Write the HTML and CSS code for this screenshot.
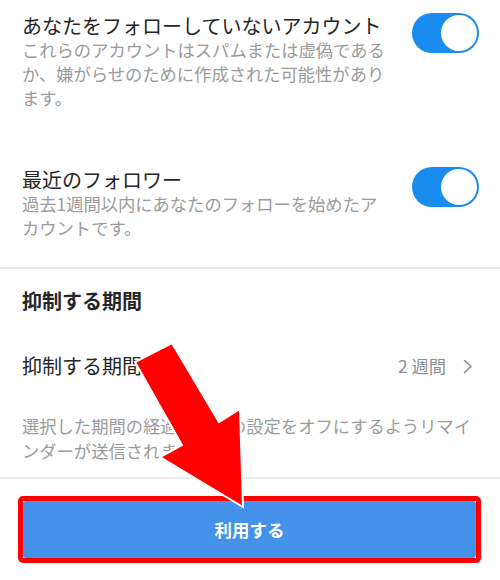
FILE: index.html
```html
<!DOCTYPE html>
<html lang="ja">
<head>
  <meta charset="UTF-8">
  <meta name="viewport" content="width=device-width, initial-scale=1.0">
  <title>制限するアカウント</title>
  <link rel="stylesheet" href="styles.css">
</head>
<body>
  <div class="screen">
    <section class="group">
      <div class="setting">
        <div class="setting-text">
          <div class="setting-title">あなたをフォローしていないアカウント</div>
          <div class="setting-desc">これらのアカウントはスパムまたは虚偽であるか、嫌がらせのために作成された可能性があります。</div>
        </div>
        <div class="toggle on"><span class="knob"></span></div>
      </div>

      <div class="setting second">
        <div class="setting-text">
          <div class="setting-title">最近のフォロワー</div>
          <div class="setting-desc">過去1週間以内にあなたのフォローを始めたアカウントです。</div>
        </div>
        <div class="toggle on"><span class="knob"></span></div>
      </div>
    </section>

    <hr class="divider">

    <section class="period">
      <h2 class="period-heading">抑制する期間</h2>
      <div class="period-row">
        <span class="period-label">抑制する期間</span>
        <span class="period-value">2 週間
          <svg class="chevron" width="10" height="15" viewBox="0 0 10 15">
            <path d="M1.5 1.5 L8 7.5 L1.5 13.5" fill="none" stroke="#8e8e8e" stroke-width="1.6" stroke-linecap="round" stroke-linejoin="round"/>
          </svg>
        </span>
      </div>
      <p class="period-note">選択した期間の経過後にこの設定をオフにするようリマインダーが送信されます。</p>
    </section>

    <hr class="divider">

    <div class="footer">
      <div class="highlight">
        <button class="primary-btn">利用する</button>
      </div>
    </div>

    <!-- pointer arrow drawn on top of the page -->
    <svg class="pointer" width="500" height="580" viewBox="0 0 500 580">
      <polygon points="135,362 172,343 219,422 240,409 243,507 160,457 182,445" fill="#ff0000" stroke="#ffffff" stroke-width="2" stroke-linejoin="miter"/>
    </svg>
  </div>
</body>
</html>
```

FILE: styles.css
```css
body {
  margin: 0;
  background: #fff;
  font-family: "Noto Sans CJK JP", "Noto Sans", sans-serif;
  color: #262626;
}

.screen {
  position: relative;
  width: 500px;
  height: 580px;
  overflow: hidden;
}

/* Toggle rows */
.setting {
  display: flex;
  align-items: flex-start;
  gap: 20px;
  padding: 14px 21px 0 22px;
}

.setting.second {
  padding-top: 58px;
}

.setting-text {
  width: 370px;
}

.setting-title {
  font-size: 20px;
  line-height: 24px;
}

.setting-desc {
  font-size: 17.3px;
  line-height: 24px;
  color: #9b9b9b;
}

.toggle {
  width: 67px;
  height: 40px;
  margin-top: -1px;
  border-radius: 20px;
  background: #c7c7c7;
  position: relative;
  flex-shrink: 0;
}

.toggle.on {
  background: #1a8cf0;
}

.toggle .knob {
  position: absolute;
  top: 2px;
  left: 2px;
  width: 36px;
  height: 36px;
  border-radius: 50%;
  background: #fff;
}

.toggle.on .knob {
  left: auto;
  right: 2px;
}

.divider {
  margin: 0;
  border: 0;
  height: 2px;
  background: #ececec;
}

.group + .divider {
  margin-top: 27px;
}

/* Period section */
.period {
  padding: 20px 22px 0;
}

.period-heading {
  margin: 0;
  font-size: 20px;
  line-height: 24px;
  font-weight: 700;
}

.period-row {
  display: flex;
  justify-content: space-between;
  align-items: center;
  margin-top: 41px;
  font-size: 20px;
  line-height: 24px;
}

.period-value {
  display: flex;
  align-items: center;
  gap: 17px;
  font-size: 17.3px;
  color: #8e8e8e;
  padding-right: 5px;
}

.chevron {
  display: block;
}

.period-note {
  margin: 35px 0 14px;
  font-size: 17.3px;
  line-height: 25px;
  color: #9b9b9b;
}

/* Bottom button */
.footer {
  padding: 17px 19px 0 18px;
}

.highlight {
  border: 5px solid #ff0000;
  border-radius: 5px;
}

.primary-btn {
  display: block;
  width: 100%;
  height: 57px;
  border: 0;
  border-radius: 3px;
  background: #4592ea;
  color: #fff;
  font-family: "Noto Sans CJK JP", sans-serif;
  font-size: 17.5px;
  font-weight: 700;
  cursor: pointer;
}

.pointer {
  position: absolute;
  top: 0;
  left: 0;
  pointer-events: none;
}
```
